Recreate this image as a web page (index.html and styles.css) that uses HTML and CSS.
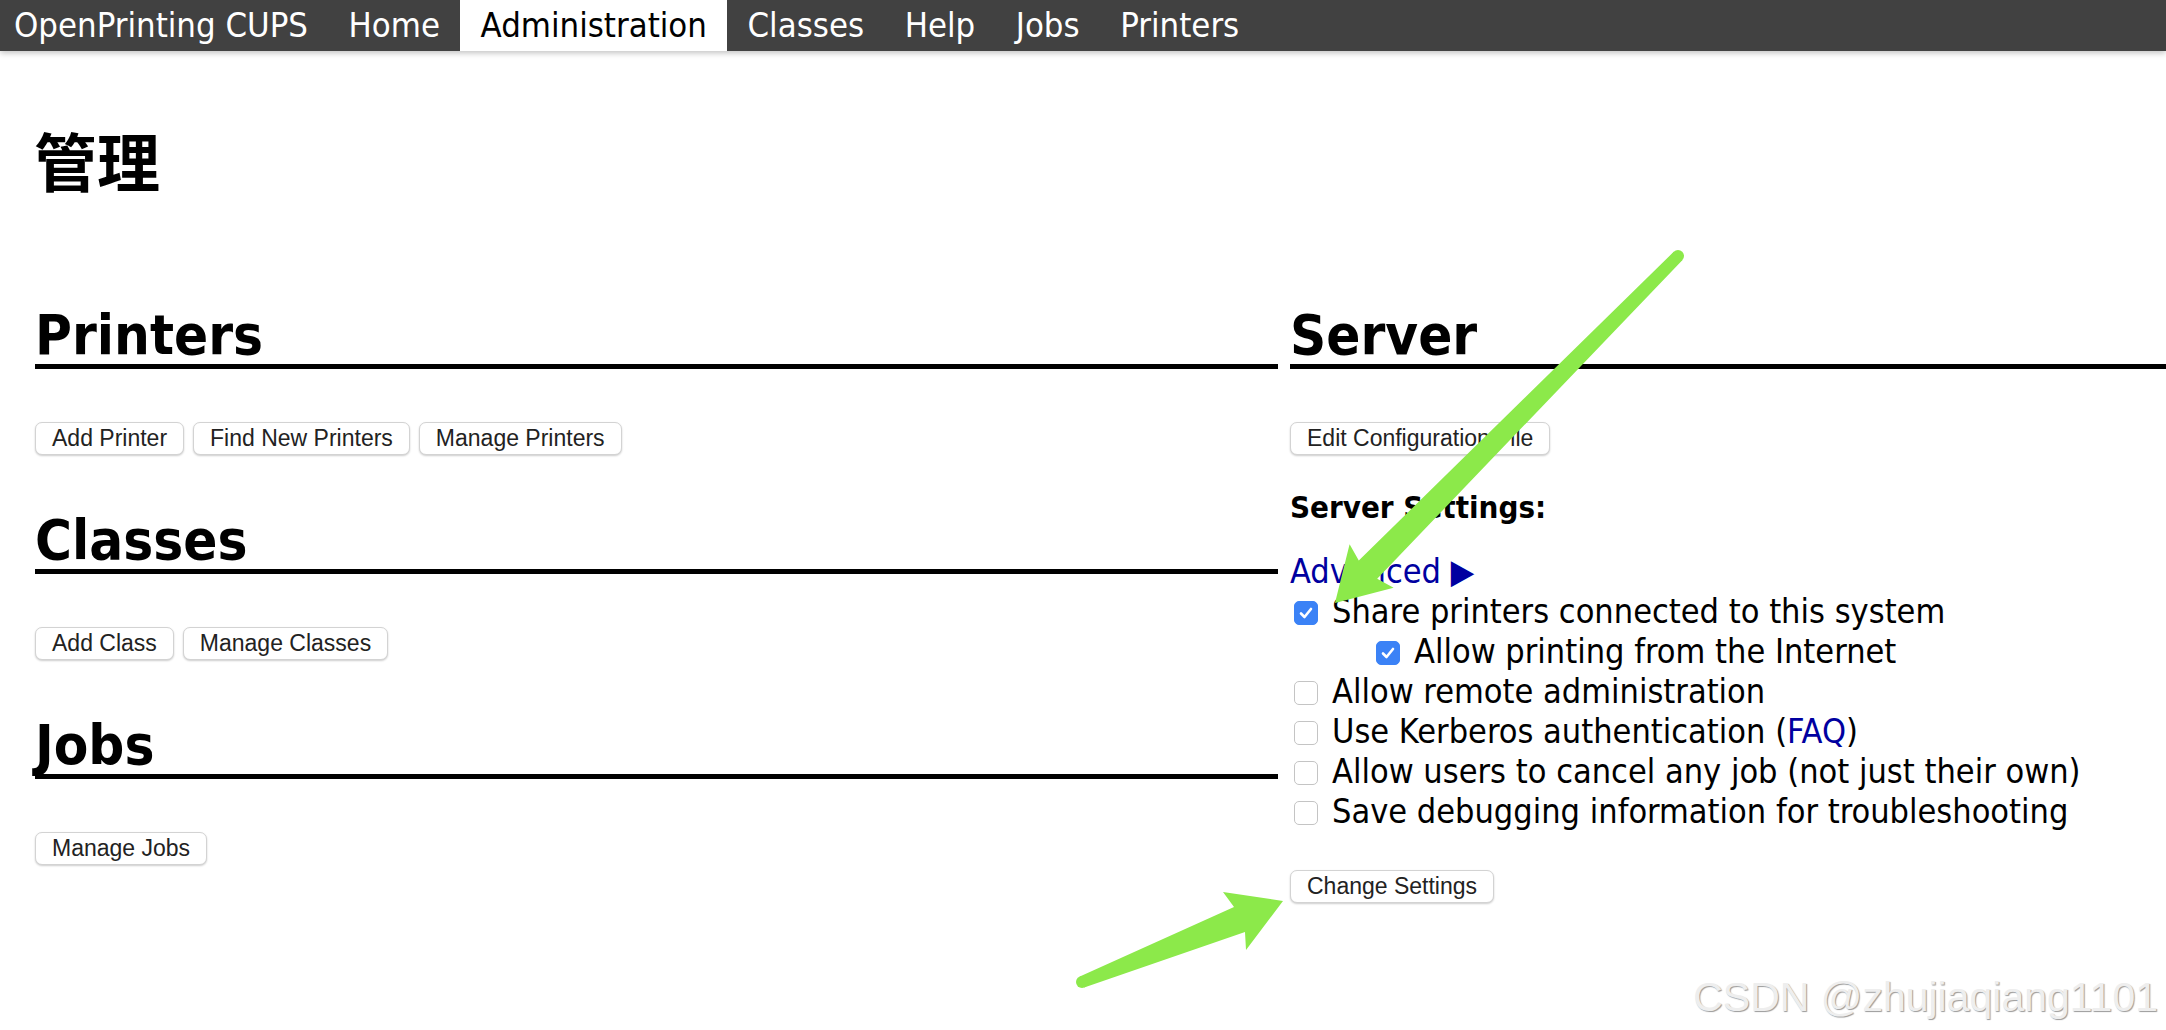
FILE: index.html
```html
<!DOCTYPE html>
<html lang="zh">
<head>
    <meta charset="UTF-8">
    <title>管理 - CUPS</title>
    <link rel="stylesheet" href="styles.css">
</head>
<body>

    <div class="nav">
        <a class="brand" href="#">OpenPrinting CUPS</a>
        <a href="#">Home</a>
        <a class="active" href="#">Administration</a>
        <a href="#">Classes</a>
        <a href="#">Help</a>
        <a href="#">Jobs</a>
        <a href="#">Printers</a>
    </div>

    <div class="page">
        <h1 class="title">管理</h1>

        <div class="halves">
            <div class="half left">
                <div class="section">
                    <h2>Printers</h2>
                    <div class="buttons">
                        <button>Add Printer</button>
                        <button>Find New Printers</button>
                        <button>Manage Printers</button>
                    </div>
                </div>
                <div class="section">
                    <h2>Classes</h2>
                    <div class="buttons">
                        <button>Add Class</button>
                        <button>Manage Classes</button>
                    </div>
                </div>
                <div class="section">
                    <h2>Jobs</h2>
                    <div class="buttons">
                        <button>Manage Jobs</button>
                    </div>
                </div>
            </div>

            <div class="half right">
                <div class="section server">
                    <h2>Server</h2>
                    <div class="buttons">
                        <button>Edit Configuration File</button>
                    </div>
                </div>

                <form class="settings">
                    <p class="settings-title">Server Settings:</p>
                    <div class="options">
                        <a href="#">Advanced &#x25b6;</a>
                        <label class="opt"><span class="box on"><svg viewBox="0 0 22 22"><path d="M6 11.5 L9.5 15 L16 7" /></svg></span>Share printers connected to this system</label>
                        <label class="opt sub"><span class="box on"><svg viewBox="0 0 22 22"><path d="M6 11.5 L9.5 15 L16 7" /></svg></span>Allow printing from the Internet</label>
                        <label class="opt"><span class="box"></span>Allow remote administration</label>
                        <label class="opt"><span class="box"></span>Use Kerberos authentication (<a href="#">FAQ</a>)</label>
                        <label class="opt"><span class="box"></span>Allow users to cancel any job (not just their own)</label>
                        <label class="opt"><span class="box"></span>Save debugging information for troubleshooting</label>
                    </div>
                    <div class="buttons submit">
                        <button type="button">Change Settings</button>
                    </div>
                </form>
            </div>
        </div>
    </div>

    <!-- annotation arrows drawn over the screenshot -->
    <svg class="marks" viewBox="0 0 2166 1030">
        <polygon points="1335,603 1393.6,587.8 1377.2,578.7 1682.3,260.2 1673.7,251.8 1358.8,560.5 1349.6,544.2" />
        <circle cx="1678" cy="256" r="6" />
        <polygon points="1283,901 1223,892 1234,907 1079.8,976.4 1084.2,987.6 1245,932 1246,950" />
        <circle cx="1082" cy="982" r="6" />
    </svg>

    <div class="watermark">CSDN @zhujiaqiang1101</div>

</body>
</html>
```

FILE: styles.css
```css
body {
    margin: 0;
    background-color: #fff;
    color: #000;
    font-family: "DejaVu Sans Condensed", "DejaVu Sans", sans-serif;
}
.nav {
    display: flex;
    height: 51px;
    background-color: #414141;
    box-shadow: 0 2px 6px rgba(0, 0, 0, 0.25);
}
.nav a {
    display: block;
    padding: 0 20.3px;
    color: #fff;
    font-size: 34.4px;
    line-height: 51px;
    text-decoration: none;
}
.nav a.brand {
    padding-left: 14px;
}
.nav a.active {
    background-color: #fff;
    color: #000;
}
.title {
    margin: 81px 0 0 34px;
    font-family: "DejaVu Sans", "Noto Sans CJK SC", sans-serif;
    font-size: 63px;
    line-height: 66px;
    font-weight: 700;
}
.halves {
    display: flex;
    gap: 12px;
    padding-left: 35px;
    margin-top: 109px;
}
.left {
    flex: none;
    width: 1243px;
}
.right {
    flex: 1;
    min-width: 0;
}
.section {
    margin-bottom: 57px;
}
.section.server {
    margin-bottom: 0;
}
.section h2 {
    margin: 0 0 53px;
    padding-bottom: 1px;
    font-size: 56px;
    line-height: 56px;
    font-weight: 700;
    border-bottom: 5px solid #000;
}
.buttons {
    display: flex;
    gap: 9px;
}
button {
    height: 33px;
    padding: 0 16px;
    font-family: "Liberation Sans", Arial, sans-serif;
    font-size: 23px;
    color: #222;
    background-color: #fff;
    border: 1px solid #d3d3d3;
    border-radius: 7px;
    box-shadow: 0 1px 2px rgba(0, 0, 0, 0.2);
}
.settings {
    margin: 0;
}
.settings-title {
    margin: 32px 0 0;
    font-size: 31px;
    line-height: 40px;
    font-weight: 700;
}
.options {
    margin-top: 24px;
    font-size: 34px;
    line-height: 40px;
}
.options a {
    color: #0000a0;
    text-decoration: none;
}
.opt {
    display: block;
}
.box {
    display: inline-block;
    box-sizing: border-box;
    width: 24px;
    height: 24px;
    margin: 0 14px 0 4px;
    vertical-align: -2px;
    background-color: #fff;
    border: 1px solid #c4c4c4;
    border-radius: 5px;
}
.box.on {
    background-color: #3b82f6;
    border-color: #3b82f6;
}
.box svg {
    display: block;
    width: 22px;
    height: 22px;
    fill: none;
    stroke: #fff;
    stroke-width: 2.6;
    stroke-linecap: round;
    stroke-linejoin: round;
}
.opt.sub .box {
    margin-left: 86px;
}
.submit {
    margin-top: 39px;
}
.marks {
    position: absolute;
    left: 0;
    top: 0;
    width: 2166px;
    height: 1030px;
    fill: #8ce94a;
    pointer-events: none;
}
.watermark {
    position: absolute;
    right: 8px;
    bottom: 12px;
    font-family: "Liberation Sans", Arial, sans-serif;
    font-size: 41px;
    line-height: 41px;
    color: #eeeeee;
    text-shadow: 1px 1px 1px #9a9a9a;
}
```
